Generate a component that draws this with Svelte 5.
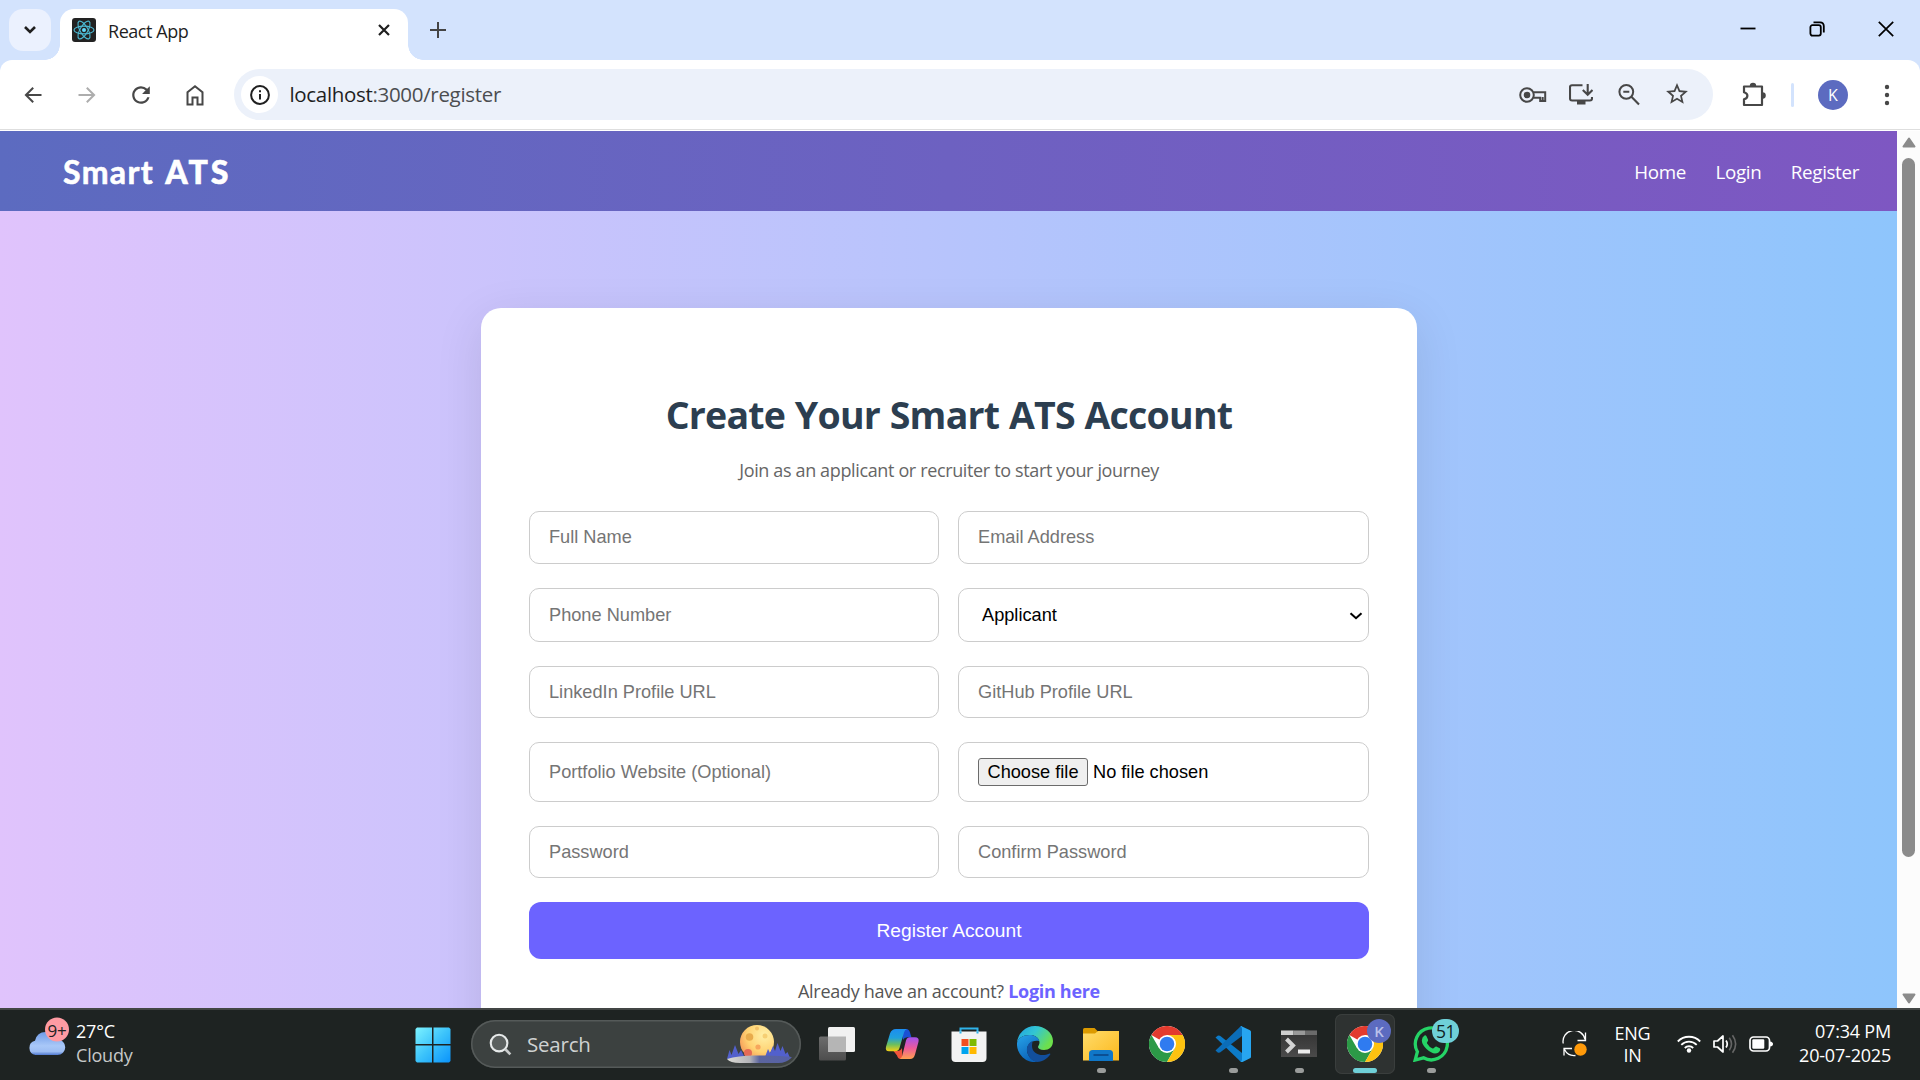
<script>
  const links = ['Home', 'Login', 'Register'];
  const blades = [0, 60, 120];
</script>

{#snippet chrome()}
  <svg class="app" viewBox="0 0 36 36">
    <circle cx="18" cy="18" r="18" fill="#fff" />
    <path d="M18 18 2.4 9A18 18 0 0 1 33.6 9H18z" fill="#e33b2e" />
    <path d="M2.4 9A18 18 0 0 0 18 36l7.8-13.5-7.8-4.500L10.200 22.500z" fill="#2c9a47" />
    <path d="M33.600 9A18 18 0 0 1 18 36l7.800-13.500L25.800 13.500 18 9z" fill="#fdc210" />
    <circle cx="18" cy="18" r="9" fill="#fff" />
    <circle cx="18" cy="18" r="7.300" fill="#2f7bf0" />
  </svg>
{/snippet}

<div class="screen">
  <header class="tabs">
    <button class="tabsearch" aria-label="Search tabs">
      <svg width="14" height="10" viewBox="0 0 14 10"><path d="M2 2l5 5 5-5" fill="none" stroke="#1f1f1f" stroke-width="2.600" /></svg>
    </button>
    <div class="tab">
      <svg class="fav" viewBox="0 0 24 24">
        <rect width="24" height="24" rx="3" fill="#222" />
        {#each blades as a}
          <ellipse cx="12" cy="12" rx="10" ry="3.900" fill="none" stroke="#4cb9d3" stroke-width="1.100" transform="rotate({a} 12 12)" />
        {/each}
        <circle cx="12" cy="12" r="2" fill="#61dafb" />
      </svg>
      <span class="tabname">React App</span>
      <svg class="tabclose" viewBox="0 0 12 12"><path d="M1 1l10 10M11 1L1 11" stroke="#1f1f1f" stroke-width="2.200" /></svg>
    </div>
    <svg class="plus" viewBox="0 0 16 16"><path d="M8 0v16M0 8h16" stroke="#444" stroke-width="2" /></svg>
    <div class="win">
      <svg viewBox="0 0 16 16"><path d="M.5 7.500h15" stroke="#000" stroke-width="1.800" /></svg>
      <svg viewBox="0 0 16 16"><rect x="1.400" y="4.200" width="10.400" height="10.400" rx="2" fill="none" stroke="#000" stroke-width="1.800" /><path d="M4.500 1.300h6.500q3.800 0 3.800 3.800v6.400" fill="none" stroke="#000" stroke-width="1.800" /></svg>
      <svg viewBox="0 0 16 16"><path d="M.8.8l14.400 14.400M15.200.8L.8 15.200" stroke="#000" stroke-width="1.700" /></svg>
    </div>
  </header>

  <div class="toolwrap">
    <div class="toolbar">
      <div class="navicons">
        <svg viewBox="0 0 24 24"><path d="M20.500 11H7.400l5.500-5.600L11.500 4l-8 8 8 8 1.400-1.400L7.400 13h13.100z" fill="#474747" /></svg>
        <svg viewBox="0 0 24 24"><path d="M3.500 11h13.100l-5.500-5.600L12.500 4l8 8-8 8-1.400-1.400 5.500-5.600H3.500z" fill="#adadad" /></svg>
        <svg viewBox="0 0 24 24"><path d="M17.650 6.350A7.960 7.960 0 0 0 12 4c-4.420 0-8 3.580-8 8s3.580 8 8 8c3.730 0 6.840-2.550 7.730-6h-2.080A5.990 5.990 0 0 1 12 18c-3.310 0-6-2.690-6-6s2.690-6 6-6c1.660 0 3.140.69 4.220 1.780L13 11h7V4l-2.350 2.350z" fill="#474747" transform="translate(-1.200 -1.200) scale(1.100)" /></svg>
        <svg viewBox="0 0 24 24"><path d="M4.500 9.300L12 3.200l7.500 6.100v12.200h-5v-7h-5v7h-5z" fill="none" stroke="#474747" stroke-width="2" /></svg>
      </div>
      <div class="omni">
        <span class="site"><svg viewBox="0 0 20 20"><circle cx="10" cy="10" r="8.900" fill="none" stroke="#1f1f1f" stroke-width="2" /><path d="M10 9v5.500M10 5.300v2" stroke="#1f1f1f" stroke-width="2" /></svg></span>
        <span class="url">localhost<i>:3000/register</i></span>
        <div class="omniicons">
          <svg class="key" viewBox="0 0 28 18"><circle cx="8" cy="9" r="6.800" fill="none" stroke="#474747" stroke-width="2" /><circle cx="8" cy="9" r="3.300" fill="#474747" /><path d="M14.500 6.200h11.700V15h-5v-3.300h-6.500M21.200 12v3M23.700 11v4" fill="none" stroke="#474747" stroke-width="2" /></svg>
          <svg viewBox="0 0 24 24"><path d="M13.500 2.200H3q-2 0-2 2v11.300q0 2 2 2h18q2 0 2-2V14" fill="none" stroke="#474747" stroke-width="2.100" /><path d="M8 17.500h8.500v4H8z" fill="#474747" /><path d="M18.700 1v10.500M13.800 7l4.900 4.800L23.500 7" fill="none" stroke="#474747" stroke-width="2.100" /></svg>
          <svg viewBox="0 0 24 24"><circle cx="9.300" cy="8.800" r="6.900" fill="none" stroke="#474747" stroke-width="2" /><path d="M6.300 8.800h6M14.400 13.800l7.600 7.700" stroke="#474747" stroke-width="2.100" /></svg>
          <svg class="star" viewBox="1 1 22 22"><path d="M22 9.240l-7.190-.62L12 2 9.190 8.630 2 9.240l5.460 4.730L5.820 21 12 17.270 18.180 21l-1.630-7.030L22 9.240zM12 15.400l-3.760 2.270 1-4.280-3.320-2.880 4.380-.38L12 6.100l1.710 4.040 4.380.38-3.320 2.880 1 4.280L12 15.400z" fill="#474747" /></svg>
        </div>
      </div>
      <svg class="puzzle" viewBox="0 0 26 26"><path d="M3 4.500h18v18.500H3v-5.800q3.400-.8 3.400-3.500T3 10.200z" fill="none" stroke="#474747" stroke-width="2.200" stroke-linejoin="round" /><path d="M8.800 4a3.200 3.200 0 0 1 6.400 0zM21.500 10.300a3.300 3.300 0 0 1 0 6.600z" fill="#474747" /></svg>
      <span class="sep"></span>
      <span class="avatar">K</span>
      <svg class="dots" viewBox="0 0 6 22"><circle cx="3" cy="3" r="2.200" fill="#474747" /><circle cx="3" cy="11" r="2.200" fill="#474747" /><circle cx="3" cy="19" r="2.200" fill="#474747" /></svg>
    </div>
  </div>

  <div class="view">
    <div class="page">
      <nav>
        <span class="logo">Smart <b>ATS</b></span>
        <div class="links">{#each links as l}<a href="#{l}">{l}</a>{/each}</div>
      </nav>
      <main>
        <section class="card">
          <h1>Create Your Smart ATS Account</h1>
          <p class="sub">Join as an applicant or recruiter to start your journey</p>
          <form>
            <input placeholder="Full Name" />
            <input placeholder="Email Address" />
            <input placeholder="Phone Number" />
            <div class="selectbox">
              <span>Applicant</span>
              <svg width="14" height="8" viewBox="0 0 14 8"><path d="M1.500 1.200L7 6.200l5.500-5" fill="none" stroke="#000" stroke-width="2.100" /></svg>
            </div>
            <input placeholder="LinkedIn Profile URL" />
            <input placeholder="GitHub Profile URL" />
            <input placeholder="Portfolio Website (Optional)" />
            <div class="file"><span class="choose">Choose file</span><span class="nofile">No file chosen</span></div>
            <input placeholder="Password" />
            <input placeholder="Confirm Password" />
            <button type="button" class="submit">Register Account</button>
          </form>
          <p class="signin">Already have an account? <b>Login here</b></p>
        </section>
      </main>
    </div>
    <div class="scroll">
      <svg viewBox="0 0 14 11"><path d="M7 1.500L12.500 9.500h-11z" fill="#8b8b8b" stroke="#8b8b8b" stroke-width="2" stroke-linejoin="round" /></svg>
      <span class="thumb"></span>
      <svg viewBox="0 0 14 11"><path d="M7 9.500L12.500 1.500h-11z" fill="#8b8b8b" stroke="#8b8b8b" stroke-width="2" stroke-linejoin="round" /></svg>
    </div>
  </div>

  <footer>
    <div class="weather">
      <svg width="42" height="40" viewBox="0 0 42 40">
        <defs><linearGradient id="cl" x2="0" y2="1"><stop stop-color="#6f9be8" /><stop offset=".6" stop-color="#a9c8f8" /><stop offset=".85" stop-color="#9dbdf3" /><stop offset="1" stop-color="#4f78cf" /></linearGradient></defs>
        <path d="M7.500 38a7.300 7.300 0 0 1-.5-14.300Q9 15 17.500 15q7 0 9.500 7.500h2.500a7.700 7.700 0 0 1 0 15.500z" fill="url(#cl)" />
        <circle cx="29" cy="12.500" r="12" fill="#ff9ba3" />
      </svg>
      <span class="nine">9+</span>
      <div class="wtext"><span>27°C</span><span class="dim">Cloudy</span></div>
    </div>
    <svg class="start" viewBox="0 0 36 36">
      <defs><linearGradient id="wn" x2="1" y2="1"><stop stop-color="#7df3ff" /><stop offset=".5" stop-color="#3cc3fb" /><stop offset="1" stop-color="#0a93fb" /></linearGradient></defs>
      <path d="M2 .5h15v16.500H.500V2zM18.500.500H34L35.500 2v15h-17zM.500 18.500H17v17H2L.500 34zM18.500 18.500h17V34L34 35.500H18.500z" fill="url(#wn)" />
    </svg>
    <div class="search">
      <svg class="mag" viewBox="0 0 24 24"><circle cx="10.500" cy="10.500" r="8.700" fill="#5b605f" stroke="#e6e9e9" stroke-width="2.200" /><path d="M17 17l5.300 5.300" stroke="#c9cccc" stroke-width="2.800" /></svg>
      <span>Search</span>
      <svg class="moon" viewBox="0 0 66 40">
        <defs>
          <radialGradient id="mo" cx=".7" cy=".3" r=".9"><stop stop-color="#fff0a8" /><stop offset=".55" stop-color="#ffd272" /><stop offset="1" stop-color="#f2874f" /></radialGradient>
          <linearGradient id="gr"><stop stop-color="#dcdcd6" /><stop offset=".35" stop-color="#b4b4b8" /><stop offset=".5" stop-color="#5c659e" /><stop offset="1" stop-color="#5560a8" /></linearGradient>
        </defs>
        <circle cx="31" cy="18" r="17" fill="url(#mo)" />
        <circle cx="23.500" cy="13" r="3.800" fill="#e8ab4c" /><circle cx="22" cy="29" r="4" fill="#e56a55" /><circle cx="32" cy="23" r="2.600" fill="#f7a65c" /><circle cx="39" cy="12" r="2.500" fill="#f6cf74" /><circle cx="31" cy="4.500" r="2" fill="#f3c168" />
        <path d="M1 35l2.500-9 2 5L9 21l3.500 9 2.500-4 4 8zM39 33l3-8 2 4 3-7 2 5 2.500-8 3 8 2-5 3 8 2-2 3 7z" fill="#5260cc" />
        <path d="M1 35q12-4 32-3.500Q52 31 66 33q-5 6-14 6H14Q4 39 1 35z" fill="url(#gr)" />
      </svg>
    </div>
    <div class="apps">
      <div class="slot"><svg class="app" viewBox="0 0 36 36"><defs><linearGradient id="tv" x2="0" y2="1"><stop stop-color="#6d6d6d" /><stop offset="1" stop-color="#4d4d4d" /></linearGradient></defs><rect y="10.500" width="27" height="24" rx="1.500" fill="url(#tv)" /><rect x="9" y="1" width="27" height="25" rx="1.500" fill="#f1f1f1" /><path d="M9 10.500h18V26H10.500L9 24.500z" fill="#b5b5b5" /></svg></div>
      <div class="slot">
        <svg class="app" viewBox="0 0 36 36">
          <defs>
            <linearGradient id="c1" x2="0" y2="1"><stop stop-color="#1c8df0" /><stop offset=".4" stop-color="#1fa0dd" /><stop offset=".7" stop-color="#6cbf5e" /><stop offset="1" stop-color="#f4d013" /></linearGradient>
            <linearGradient id="c2" x2="0" y2="1"><stop stop-color="#a352ee" /><stop offset=".5" stop-color="#ee5a9a" /><stop offset="1" stop-color="#ffa14f" /></linearGradient>
          </defs>
          <path d="M17 3h4.500Q24 3 25 6.500l1.400 4.800h-3.500Q19.500 11 18 14z" fill="#1b50d4" />
          <path d="M17.500 33H16q-3 0-4-3.500L8.500 25h4Q15.500 25 17 22z" fill="#f0543c" />
          <path d="M11 3h11q-2.300.5-3 3.500L14.500 22q-1 3.200-4.500 3.200H4q-4 0-3-4.500L5 7.500Q6.500 3 11 3z" fill="url(#c1)" />
          <path d="M25 33H14.500q2-.5 2.800-3.500L21 14.500q1-3.200 4-3.200h5q4.500 0 3.500 4.500L30 28.500Q28.800 33 25 33z" fill="url(#c2)" />
        </svg>
      </div>
      <div class="slot"><svg class="app" viewBox="0 0 36 36"><path d="M9.500 8V2.500h17V8" fill="none" stroke="#2fb3ea" stroke-width="2" /><path d="M.5 5.500h35V32q0 4-4 4h-27q-4 0-4-4z" fill="#f3f3f3" /><path d="M9.500 7.500V5.500M26.500 7.500V5.500" stroke="#2fb3ea" stroke-width="2" /><path d="M10.500 13h7v7h-7z" fill="#f25022" /><path d="M18.500 13h7v7h-7z" fill="#7fba00" /><path d="M10.500 21h7v7h-7z" fill="#00a4ef" /><path d="M18.500 21h7v7h-7z" fill="#ffb900" /></svg></div>
      <div class="slot">
        <svg class="app" viewBox="0 0 36 36">
          <defs><linearGradient id="e1" x2="1" y2=".5"><stop stop-color="#1f9fe4" /><stop offset=".5" stop-color="#33c6d2" /><stop offset="1" stop-color="#6de04c" /></linearGradient><linearGradient id="e2" x2=".5" y2="1"><stop stop-color="#27a4ea" /><stop offset="1" stop-color="#0b62b8" /></linearGradient></defs>
          <path d="M0 17A18 18 0 0 1 18 0c10 0 18 7 18 15 0 6-4 9-9 9-4 0-6-1.500-6-3 0-1 1.500-2 1.500-4.500 0-4-4-7.500-10-7.500C6 9 1 12 0 17z" fill="url(#e1)" />
          <path d="M0 17c1-5 6-8 12.500-8 5 0 9 2.500 9.800 6-8-1.500-12.500 4-12.300 9 .2 5 4 10 10 12A18 18 0 0 1 0 17z" fill="url(#e2)" />
          <path d="M15.500 15c-4 2-6 5-5.500 10 1 6 5 10 10 11 6 0 11-4 13.500-8-.5-.8-1-.6-1.500-.3-7 3.500-17 .3-17-7.700 0-2 .5-4 .5-5z" fill="#124f9c" />
        </svg>
      </div>
      <div class="slot run"><svg class="app" viewBox="0 0 36 36"><defs><linearGradient id="fo" x2="1" y2="1"><stop stop-color="#ffdc6b" /><stop offset="1" stop-color="#fcb81c" /></linearGradient></defs><path d="M0 3.500Q0 2 1.500 2h10L15 5.500V12H0z" fill="#dc9a00" /><path d="M0 7.500h12l3-2.500h21v29.500H0z" fill="url(#fo)" /><path d="M6 35V27.500q0-3.500 3.500-3.500h17q3.500 0 3.500 3.500V35z" fill="#1077c8" /><path d="M10.500 29h15" stroke="#0b4f93" stroke-width="2" /></svg></div>
      <div class="slot">{@render chrome()}</div>
      <div class="slot run"><svg class="app" viewBox="0 0 36 36"><path d="M.5 11.500L3 9.500l2 .2L27 27v9h-1z" fill="#0c7bc9" /><path d="M.500 24.500L3 26.700l2-.2L27 10V0h-1z" fill="#0b6db8" /><path d="M26 0l9 4.200q1 .5 1 1.500v25q0 1-1 1.500L27.500 36q-1 .2-2-.7 1.500-.2 1.500-1.800V3Q27 1 25.500.300z" fill="#27a5f0" /></svg></div>
      <div class="slot run"><svg class="app" viewBox="0 0 36 36"><defs><linearGradient id="te" x2="0" y2="1"><stop stop-color="#333" /><stop offset="1" stop-color="#4a4a4a" /></linearGradient></defs><path d="M0 4.500h36V31H0z" fill="url(#te)" /><path d="M0 4.500h12.500V9H0z" fill="#cfcfcf" /><path d="M12.500 4.500H24V9H12.500z" fill="#999" /><path d="M24 4.500h12V9H24z" fill="#6b6b6b" /><path d="M5.500 13l6.500 6.500L5.500 26" fill="none" stroke="#d4d4d4" stroke-width="4" /><path d="M17 23.500h12v4H17z" fill="#ececec" /></svg></div>
      <div class="slot active">{@render chrome()}<span class="badge k">K</span></div>
      <div class="slot run"><svg class="app" viewBox="0 0 36 36"><path d="M2.200 34l2.200-8.300A16 16 0 1 1 10.500 31.800z" fill="none" stroke="#25d366" stroke-width="3.300" /><path d="M11.500 9.500q1.200-.6 2 .8l1.600 3.500q.3 1-.8 2.200-.6.7-.2 1.400 2 3.500 5.500 5 .8.300 1.300-.3 1.500-2 2.300-1.600l3.600 1.700q.7.600.2 2.200-1.200 3-5 3-3.500-.2-8.500-4.500-4.500-4.500-4.700-8.500.2-3.400 2.700-4.900z" fill="#25d366" /></svg><span class="badge n">51</span></div>
    </div>
    <div class="tray">
      <svg class="sync" viewBox="0 0 26 26"><path d="M1.200 12.500A11 11 0 0 1 23 8.500M23.500 1.500v8h-8M2 24.500v-7h8M2.500 18.500a11 11 0 0 0 11 6" fill="none" stroke="#fff" stroke-width="1.300" /><circle cx="18.500" cy="18.500" r="6.200" fill="#ff9a0a" /></svg>
      <div class="lang"><span>ENG</span><span>IN</span></div>
      <svg class="wifi" viewBox="0 0 24 18"><path d="M.8 6.500a15.600 15.600 0 0 1 22.400 0M4.300 9.900a10.600 10.600 0 0 1 15.400 0M7.800 13a5.900 5.900 0 0 1 8.400 0" fill="none" stroke="#fff" stroke-width="1.800" /><circle cx="12" cy="15.500" r="2.200" fill="#fff" /></svg>
      <svg class="vol" viewBox="0 0 24 20"><path d="M1 7h3.500L10 2v16l-5.500-5H1z" fill="none" stroke="#fff" stroke-width="1.700" stroke-linejoin="round" /><path d="M13 6.500q2.500 3.500 0 7" fill="none" stroke="#fff" stroke-width="1.700" /><path d="M16.300 3.800q4.400 6.200 0 12.400M19.500 1.200q6.300 8.800 0 17.600" fill="none" stroke="#666" stroke-width="1.600" /></svg>
      <svg class="bat" viewBox="0 0 24 16"><rect x="1" y="1" width="19.500" height="14" rx="3.500" fill="none" stroke="#fff" stroke-width="1.700" /><rect x="3.300" y="3.300" width="12" height="9.400" rx="1.200" fill="#fff" /><path d="M21 5.500q3 .5 3 2.500t-3 2.500z" fill="#fff" /></svg>
      <div class="clock"><span class="time">07:34 PM</span><span class="date">20-07-2025</span></div>
    </div>
  </footer>
</div>

<style>
  :global(body) { margin: 0; overflow: hidden; }
  * { box-sizing: border-box; }
  .screen { width: 1920px; height: 1080px; display: flex; flex-direction: column; overflow: hidden; font-family: 'Segoe UI', 'Open Sans', sans-serif; }
  svg { display: block; flex: none; }
  .tabs { height: 60px; flex: none; background: #d3e3fd; display: flex; align-items: flex-start; padding: 9px 0 0 9px; }
  .tabsearch { width: 42px; height: 42px; border: 0; padding: 0; border-radius: 14px; background: #ebf1fe; display: grid; place-items: center; }
  .tab { position: relative; width: 348px; height: 51px; margin-left: 9px; background: #fff; border-radius: 14px 14px 0 0; display: flex; align-items: center; padding: 0 18px 9px 12px; }
  .tab::before, .tab::after { content: ''; position: absolute; bottom: 0; width: 15px; height: 15px; }
  .tab::before { left: -15px; background: radial-gradient(circle at 0 0, transparent 14.500px, #fff 15px); }
  .tab::after { right: -15px; background: radial-gradient(circle at 100% 0, transparent 14.500px, #fff 15px); }
  .fav { width: 24px; height: 24px; }
  .tabname { flex: 1; margin-left: 12px; padding-top: 2px; font-size: 18px; letter-spacing: -.45px; color: #1f1f1f; }
  .tabclose { width: 12px; height: 12px; }
  .plus { width: 16px; height: 16px; margin: 13px 0 0 22px; }
  .win { margin-left: auto; display: flex; gap: 53px; padding: 12px 26.500px 0 0; }
  .win svg { width: 16px; height: 16px; }
  .toolwrap { flex: none; height: 71px; background: #d3e3fd; }
  .toolbar { height: 71px; background: #fff; border-radius: 12px 12px 0 0; display: flex; align-items: center; padding-bottom: 2px; box-shadow: inset 0 -1px #fff, inset 0 -2px #dedede; }
  .navicons { display: flex; gap: 30px; margin-left: 21px; }
  .navicons svg { width: 24px; height: 24px; }
  .omni { width: 1479px; height: 51px; margin-left: 27px; border-radius: 26px; background: #ecf1fa; display: flex; align-items: center; }
  .site { width: 37px; height: 37px; margin-left: 7px; border-radius: 50%; background: #fff; display: grid; place-items: center; }
  .site svg { width: 20px; height: 20px; }
  .url { margin-left: 11.500px; padding-bottom: 2px; font-size: 20.500px; letter-spacing: -.32px; color: #1f1f1f; }
  .url i { font-style: normal; color: #4b4d50; }
  .omniicons { margin-left: auto; margin-right: 24px; display: flex; align-items: center; gap: 24px; }
  .omniicons svg { width: 24px; height: 24px; }
  .omniicons .key { width: 28px; height: 18px; margin-right: -2px; }
  .omniicons .star { margin-bottom: 1px; }
  .puzzle { width: 26px; height: 26px; margin-left: 28px; }
  .sep { width: 3px; height: 24px; border-radius: 2px; margin-left: 24px; background: #d3e3fd; }
  .avatar { width: 30px; height: 30px; margin-left: 24px; border-radius: 50%; background: #5c6bc0; color: #fff; font-size: 16px; line-height: 30px; text-align: center; }
  .dots { width: 6px; height: 22px; margin-left: 36px; }

  .view { flex: 1; min-height: 0; display: flex; }
  .page { width: 1897px; overflow: hidden; display: flex; flex-direction: column; }
  nav { height: 80px; flex: none; background: linear-gradient(to right, #5c6bc0, #7e57c2); display: flex; align-items: center; justify-content: space-between; padding: 0 38px 0 63px; color: #fff; }
  .logo { font: bold 32px 'Comic Sans MS', 'Lato', sans-serif; letter-spacing: 1.400px; word-spacing: 2px; -webkit-text-stroke: .6px #fff; }
  .logo b { letter-spacing: 3px; }
  .links { display: flex; gap: 29.500px; padding-top: 2px; font-size: 18.800px; letter-spacing: -.35px; }
  .links a { color: #fff; text-decoration: none; }
  main { flex: 1; min-height: 0; background: linear-gradient(to right, #e0c3fc, #8ec5fc); padding-top: 97px; padding-left: 481px; }
  .card { width: 936px; height: 760px; background: #fff; border-radius: 20px; padding: 84px 48px 0; box-shadow: 0 12px 48px rgba(0, 0, 0, .1); }
  h1 { margin: 0; text-align: center; font-size: 37.500px; line-height: 46px; color: #2c3e50; white-space: nowrap; letter-spacing: -.76px; word-spacing: .600px; }
  p { margin: 0; text-align: center; font-size: 18px; line-height: 26px; color: #666; white-space: nowrap; }
  .sub { margin-top: 19px; letter-spacing: -.36px; }
  form { margin-top: 28px; display: grid; grid-template-columns: 410px 411px; grid-template-rows: 53px 54px 52px 60px 52px 57px; column-gap: 19px; row-gap: 24px; font: 18.200px 'Liberation Sans', Arial, sans-serif; }
  input, .selectbox, .file { width: 100%; border: 1px solid #ccc; border-radius: 10px; padding: 0 19px; font: inherit; background: #fff; outline: none; color: #000; }
  input::placeholder { color: #757575; opacity: 1; }
  .selectbox { display: flex; align-items: center; justify-content: space-between; padding: 0 5px 0 23px; }
  .selectbox svg { margin-top: 2px; }
  .file { display: flex; align-items: center; }
  .choose { width: 110px; height: 28px; line-height: 26px; text-align: center; border: 1px solid #6b6b6b; border-radius: 3px; background: #efefef; }
  .nofile { margin-left: 5px; }
  .submit { grid-column: 1 / 3; border: 0; border-radius: 12px; background: #6c63ff; color: #fff; font: 19.200px 'Liberation Sans', Arial, sans-serif; }
  .signin { margin-top: 19px; color: #555; letter-spacing: -.3px; }
  .signin b { color: #6c63ff; }
  .scroll { width: 23px; background: #fcfcfc; display: flex; flex-direction: column; align-items: center; padding: 6px 0 4px; }
  .scroll svg { width: 14px; height: 11px; }
  .thumb { width: 13px; height: 699px; margin-top: 10px; margin-bottom: auto; border-radius: 7px; background: #8b8b8b; }

  footer { height: 72px; flex: none; background: #1e2322; box-shadow: inset 0 2px #434645; display: flex; align-items: center; color: #fff; font-size: 18px; }
  .weather { position: relative; width: 387px; margin-left: 28px; display: flex; align-items: center; }
  .weather svg { margin-top: -15px; }
  .nine { position: absolute; left: 17px; top: -2px; width: 24px; text-align: center; line-height: 24px; font-size: 17px; letter-spacing: -.3px; color: #222; }
  .wtext, .lang, .clock { display: flex; flex-direction: column; line-height: 24px; white-space: nowrap; letter-spacing: -.2px; }
  .wtext { margin-left: 6px; margin-top: -2px; }
  .dim { color: #c6c8c8; }
  .start { width: 36px; height: 36px; margin-top: 1px; }
  .search { width: 330px; height: 48px; margin-left: 20px; border-radius: 24px; background: #3c4140; box-shadow: inset 0 0 0 1.500px #555a59; display: flex; align-items: center; padding: 0 9px 0 18px; color: #cfd2d2; font-size: 20.500px; letter-spacing: -.2px; }
  .mag { width: 23px; height: 23px; margin-right: 15px; }
  .moon { width: 66px; height: 40px; margin-left: auto; }
  .apps { display: flex; margin-left: 3px; }
  .slot { position: relative; width: 66px; height: 60px; display: grid; place-items: center; }
  .app { width: 36px; height: 36px; }
  .run::after, .active::after { content: ''; position: absolute; bottom: 1px; left: 29px; width: 9px; height: 5px; border-radius: 3px; background: #9a9c9b; }
  .active { width: 60px; margin: 0 3px; border-radius: 7px; background: #2e3231; box-shadow: inset 0 0 0 1px #3a3e3d; }
  .active::after { left: 18px; width: 24px; background: #6fd0d8; }
  .badge { position: absolute; top: 5px; height: 24px; line-height: 24px; border-radius: 12px; text-align: center; }
  .k { left: 32px; width: 24px; background: #5c6bc0; color: #b9c1ea; font-size: 15px; font-weight: 600; }
  .n { left: 34px; width: 27px; background: #6fd0d8; color: #10201f; font-size: 17.500px; letter-spacing: -.5px; }
  .tray { margin-left: auto; display: flex; align-items: center; padding-right: 29px; }
  .sync { width: 26px; height: 26px; }
  .lang { text-align: center; margin-left: 26px; width: 37px; line-height: 22.500px; }
  .wifi { width: 24px; height: 18px; margin-left: 26px; }
  .vol { width: 24px; height: 20px; margin-left: 12px; }
  .bat { width: 24px; height: 16px; margin-left: 12px; }
  .clock { width: 93px; margin-left: 25px; margin-top: -3px; text-align: right; }
</style>
